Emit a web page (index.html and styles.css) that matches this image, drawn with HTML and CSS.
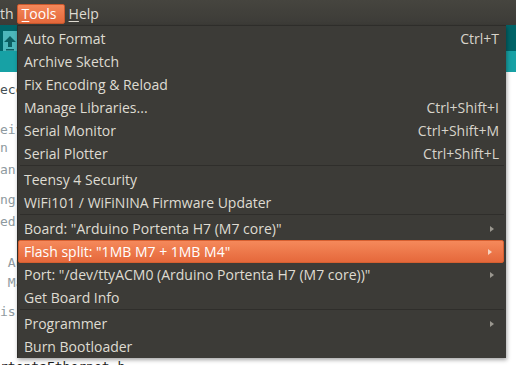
FILE: index.html
```html
<!DOCTYPE html>
<html lang="en">

<head>
    <meta charset="UTF-8">
    <title>Tools menu</title>
    <link rel="stylesheet" href="styles.css">
</head>

<body>
    <div class="window">
        <!-- menubar -->
        <div class="menubar">
            <span class="mb-item mb-cut">th</span>
            <span class="mb-item mb-open"><u>T</u>ools</span>
            <span class="mb-item"><u>H</u>elp</span>
        </div>

        <!-- ide toolbar behind the menu -->
        <div class="toolbar">
            <div class="tb-button">
                <svg width="14" height="18" viewBox="0 0 14 18">
                    <path d="M7 2 L13 8 H9 V13 H5 V8 H1 Z" fill="#0b5f62" />
                    <rect x="3" y="15" width="8" height="1.5" fill="#0b5f62" />
                </svg>
            </div>
        </div>
        <div class="tabs"></div>

        <!-- editor -->
        <div class="editor">
            <div class="line l1">ece</div>
            <div class="line l2">eiv</div>
            <div class="line l3">n</div>
            <div class="line l4">an</div>
            <div class="line l5">ng</div>
            <div class="line l6">ed</div>
            <div class="line l7">&nbsp;Au</div>
            <div class="line l8">&nbsp;Ma</div>
            <div class="line l9">is</div>
            <div class="line l10 dark">rtentaEthernet.h</div>
        </div>

        <!-- tools menu -->
        <div class="menu">
            <div class="item"><span>Auto Format</span><span class="key">Ctrl+T</span></div>
            <div class="item"><span>Archive Sketch</span></div>
            <div class="item"><span>Fix Encoding &amp; Reload</span></div>
            <div class="item"><span>Manage Libraries...</span><span class="key">Ctrl+Shift+I</span></div>
            <div class="item"><span>Serial Monitor</span><span class="key">Ctrl+Shift+M</span></div>
            <div class="item"><span>Serial Plotter</span><span class="key">Ctrl+Shift+L</span></div>
            <div class="sep"></div>
            <div class="item"><span>Teensy 4 Security</span></div>
            <div class="item"><span>WiFi101 / WiFiNINA Firmware Updater</span></div>
            <div class="sep"></div>
            <div class="item"><span>Board: "Arduino Portenta H7 (M7 core)"</span><span class="arrow"></span></div>
            <div class="item active"><span>Flash split: "1MB M7 + 1MB M4"</span><span class="arrow"></span></div>
            <div class="item"><span>Port: "/dev/ttyACM0 (Arduino Portenta H7 (M7 core))"</span><span class="arrow"></span></div>
            <div class="item"><span>Get Board Info</span></div>
            <div class="sep"></div>
            <div class="item"><span>Programmer</span><span class="arrow"></span></div>
            <div class="item"><span>Burn Bootloader</span></div>
        </div>
    </div>
</body>

</html>
```

FILE: styles.css
```css
body {
    margin: 0;
    width: 516px;
    height: 365px;
    overflow: hidden;
    background-color: #ffffff;
    font-family: "Open Sans", "Noto Sans", sans-serif;
}
.window {
    position: relative;
    height: 365px;
    overflow: hidden;
}

.menubar {
    display: flex;
    height: 25px;
    align-items: center;
    background: linear-gradient(#46453f, #3c3b37);
    color: #dfdbd2;
    font-size: 14px;
}
.mb-item {
    padding: 0 4px;
    height: 18px;
    line-height: 18px;
    margin-top: 2px;
}
.mb-cut {
    padding: 0 3px 0 0;
}
.mb-open {
    width: 38px;
    background: linear-gradient(#f5885a, #e4683b);
    border: 1px solid #c9582d;
    border-radius: 2px;
    color: #ffffff;
}
.mb-item u {
    text-decoration-thickness: 1px;
    text-underline-offset: 2px;
}

.toolbar {
    height: 20px;
    background-color: #006468;
    padding: 6px 0 0 3px;
}
.tb-button {
    width: 14px;
    height: 24px;
    background-color: #4db7bb;
    display: flex;
    align-items: center;
    justify-content: center;
}
.tabs {
    height: 21px;
    background-color: #17a1a5;
}

.editor {
    font-family: "DejaVu Sans Mono", monospace;
    font-size: 13px;
    color: #8e9aa0;
    line-height: 16px;
}
.line {
    white-space: pre;
}
.l1 { margin-top: 10px; color: #434f54; }
.l2 { margin-top: 24px; }
.l3 { margin-top: 2px; }
.l4 { margin-top: 6px; }
.l5 { margin-top: 14px; }
.l6 { margin-top: 6px; }
.l7 { margin-top: 25px; }
.l8 { margin-top: 4px; }
.l9 { margin-top: 13px; }
.l10 { margin-top: 39px; }
.dark { color: #1e1e1e; }

.menu {
    position: absolute;
    left: 17px;
    top: 25px;
    width: 489px;
    padding: 1px 0 0;
    box-sizing: border-box;
    height: 333px;
    background-color: #3c3b37;
    border-top: 1px solid #2e2d2a;
    border-left: 1px solid #2e2d2a;
    box-shadow: 1px 2px 4px rgba(0, 0, 0, 0.35);
    color: #dfdbd2;
    font-size: 14px;
}
.item {
    display: flex;
    align-items: center;
    justify-content: space-between;
    height: 23px;
    padding: 0 7px 0 6px;
    box-sizing: border-box;
}
.item.active {
    margin: 0 2px 0 0;
    background: linear-gradient(#f5895b, #e5683b);
    border: 1px solid #d65f30;
    border-radius: 2px;
    color: #ffffff;
    padding: 0 9px 0 5px;
}
.key {
    color: #d8d4cb;
}
.arrow {
    width: 0;
    height: 0;
    border-top: 3px solid transparent;
    border-bottom: 3px solid transparent;
    border-left: 4px solid #9a978f;
    margin-right: 5px;
}
.active .arrow {
    border-left-color: #f6d2bf;
    margin-right: 2px;
}
.sep {
    height: 3px;
    margin: 0 2px;
    border-top: 1px solid #2f2e2b;
    box-sizing: border-box;
}
```
